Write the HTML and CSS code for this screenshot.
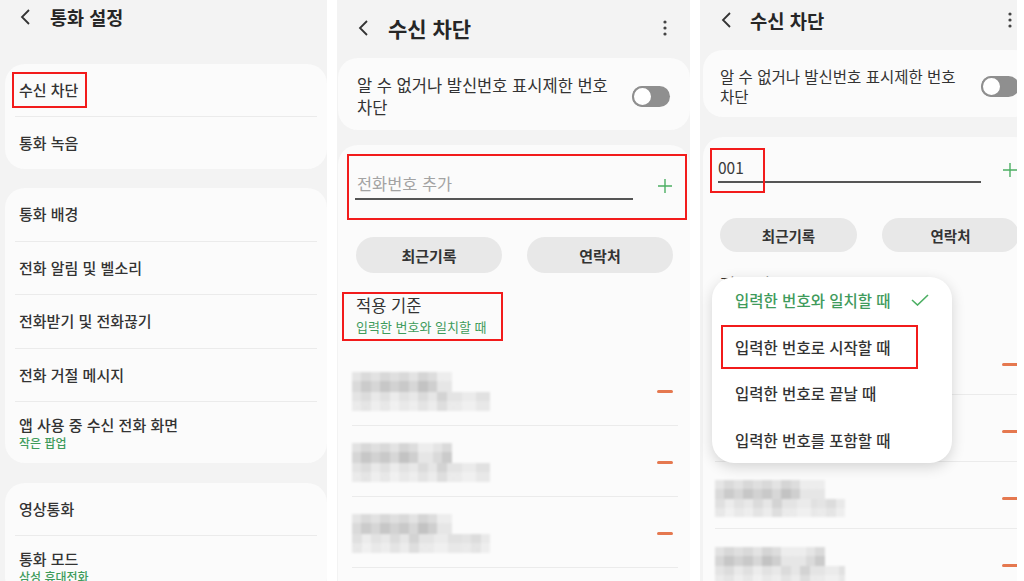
FILE: index.html
```html
<!DOCTYPE html>
<html lang="ko">
<head>
    <meta charset="UTF-8">
    <meta name="viewport" content="width=device-width, initial-scale=1.0">
    <title>수신 차단 설정</title>
    <link rel="stylesheet" href="styles.css">
</head>
<body>
    <div class="screens">

        <!-- 화면 1: 통화 설정 -->
        <section class="phone phone-settings">
            <div class="phone-inner">
                <header class="app-bar">
                    <svg class="back-icon" viewBox="0 0 12 16"><polyline points="10,1 3,8 10,15"/></svg>
                    <h1 class="app-title">통화 설정</h1>
                </header>

                <div class="card menu-card first">
                    <div class="menu-row"><span class="mark mark-item">수신 차단</span></div>
                    <div class="menu-row">통화 녹음</div>
                </div>

                <div class="card menu-card tall">
                    <div class="menu-row">통화 배경</div>
                    <div class="menu-row">전화 알림 및 벨소리</div>
                    <div class="menu-row">전화받기 및 전화끊기</div>
                    <div class="menu-row">전화 거절 메시지</div>
                    <div class="menu-row double">
                        <span>앱 사용 중 수신 전화 화면</span>
                        <span class="sub">작은 팝업</span>
                    </div>
                </div>

                <div class="card menu-card last">
                    <div class="menu-row">영상통화</div>
                    <div class="menu-row double">
                        <span>통화 모드</span>
                        <span class="sub">삼성 휴대전화</span>
                    </div>
                </div>
            </div>
        </section>

        <!-- 화면 2: 수신 차단 -->
        <section class="phone phone-block">
            <div class="phone-inner">
                <header class="app-bar">
                    <svg class="back-icon" viewBox="0 0 12 16"><polyline points="10,1 3,8 10,15"/></svg>
                    <h1 class="app-title">수신 차단</h1>
                    <svg class="more-icon" viewBox="0 0 4 16"><circle cx="2" cy="2" r="1.6"/><circle cx="2" cy="8" r="1.6"/><circle cx="2" cy="14" r="1.6"/></svg>
                </header>

                <div class="card card-switch">
                    <p class="switch-label">알 수 없거나 발신번호 표시제한 번호<br>차단</p>
                    <span class="toggle"><span class="toggle-knob"></span></span>
                </div>

                <div class="card card-list">
                    <div class="mark mark-field">
                        <div class="field">
                            <span class="field-input placeholder">전화번호 추가</span>
                            <svg class="add-icon" viewBox="0 0 16 16"><path d="M8 1v14M1 8h14"/></svg>
                        </div>
                    </div>

                    <div class="pick-buttons">
                        <button>최근기록</button>
                        <button>연락처</button>
                    </div>

                    <div class="mark mark-rule">
                        <div class="rule-title">적용 기준</div>
                        <div class="rule-value">입력한 번호와 일치할 때</div>
                    </div>

                    <ul class="blocked-list">
                        <li class="blocked-row"><div class="pixels"><span class="pixel-top"></span><span class="pixel-bot"></span></div><span class="remove"></span></li>
                        <li class="blocked-row"><div class="pixels"><span class="pixel-top"></span><span class="pixel-bot"></span></div><span class="remove"></span></li>
                        <li class="blocked-row"><div class="pixels"><span class="pixel-top"></span><span class="pixel-bot"></span></div><span class="remove"></span></li>
                        <li class="blocked-row"><div class="pixels"><span class="pixel-top"></span><span class="pixel-bot"></span></div><span class="remove"></span></li>
                    </ul>
                </div>
            </div>
        </section>

        <!-- 화면 3: 적용 기준 선택 -->
        <section class="phone phone-menu">
            <div class="phone-inner">
                <header class="app-bar">
                    <svg class="back-icon" viewBox="0 0 12 16"><polyline points="10,1 3,8 10,15"/></svg>
                    <h1 class="app-title">수신 차단</h1>
                    <svg class="more-icon" viewBox="0 0 4 16"><circle cx="2" cy="2" r="1.6"/><circle cx="2" cy="8" r="1.6"/><circle cx="2" cy="14" r="1.6"/></svg>
                </header>

                <div class="card card-switch">
                    <p class="switch-label">알 수 없거나 발신번호 표시제한 번호<br>차단</p>
                    <span class="toggle"><span class="toggle-knob"></span></span>
                </div>

                <div class="card card-list">
                    <div class="field">
                        <span class="field-input">001<span class="mark mark-value"></span></span>
                        <svg class="add-icon" viewBox="0 0 16 16"><path d="M8 1v14M1 8h14"/></svg>
                    </div>

                    <div class="pick-buttons">
                        <button>최근기록</button>
                        <button>연락처</button>
                    </div>

                    <div class="rule">
                        <div class="rule-title">적용 기준</div>
                        <div class="rule-value">입력한 번호와 일치할 때</div>
                    </div>

                    <ul class="blocked-list">
                        <li class="blocked-row"><div class="pixels"><span class="pixel-top"></span><span class="pixel-bot"></span></div><span class="remove"></span></li>
                        <li class="blocked-row"><div class="pixels"><span class="pixel-top"></span><span class="pixel-bot"></span></div><span class="remove"></span></li>
                        <li class="blocked-row"><div class="pixels"><span class="pixel-top"></span><span class="pixel-bot"></span></div><span class="remove"></span></li>
                        <li class="blocked-row"><div class="pixels"><span class="pixel-top"></span><span class="pixel-bot"></span></div><span class="remove"></span></li>
                    </ul>
                </div>

                <!-- 드롭다운 메뉴 -->
                <ul class="rule-menu">
                    <li class="menu-option selected">
                        <span class="option-label">입력한 번호와 일치할 때</span>
                        <svg class="check-icon" viewBox="0 0 18 12"><polyline points="1,6 6.5,11 17,1"/></svg>
                    </li>
                    <li class="menu-option"><span class="mark mark-option">입력한 번호로 시작할 때</span></li>
                    <li class="menu-option"><span class="option-label">입력한 번호로 끝날 때</span></li>
                    <li class="menu-option"><span class="option-label">입력한 번호를 포함할 때</span></li>
                </ul>
            </div>
        </section>

    </div>
</body>
</html>
```

FILE: styles.css
```css
/* GENERAL */
body {
    margin: 0;
    background-color: #fff;
    font-family: "Noto Sans CJK KR", "Noto Sans", sans-serif;
    color: #333;
}

.screens {
    display: flex;
    width: 1024px;
    height: 581px;
    overflow: hidden;
}

.phone {
    flex: none;
    background-color: #f3f3f3;
    overflow: hidden;
}

.phone-inner {
    position: relative;
    display: flex;
    flex-direction: column;
    height: 100%;
}

.phone-settings { width: 327px; }
.phone-block { width: 353px; margin-left: 10px; }
.phone-menu { width: 317px; margin-left: 10px; }
.phone-menu .phone-inner { width: 334px; }

/* RED ANNOTATION BOXES */
.mark {
    border: 2px solid #f21b1b;
    box-sizing: border-box;
}

/* APP BAR */
.app-bar {
    display: flex;
    align-items: center;
    flex: none;
}

.back-icon {
    width: 12px;
    height: 16px;
    fill: none;
    stroke: #333;
    stroke-width: 1.8;
}

.app-title {
    margin: 0;
    font-weight: bold;
    color: #262626;
}

.more-icon {
    width: 4px;
    height: 16px;
    margin-left: auto;
    fill: #444;
}

.phone-settings .app-bar { height: 34px; padding-left: 19px; }
.phone-settings .app-title { font-size: 18.5px; margin-left: 19px; }

.phone-block .app-bar { height: 56px; padding: 0 23px 0 20px; }
.phone-block .app-title { font-size: 21px; margin-left: 19px; }

.phone-menu .app-bar { height: 40px; padding: 0 22px 0 20px; }
.phone-menu .app-title { font-size: 18.75px; margin-left: 18px; }

/* CARDS */
.card {
    background-color: #fbfbfb;
    border-radius: 20px;
}

/* SETTINGS LIST */
.menu-card {
    margin-left: 5px;
    padding: 0 10px;
}

.menu-card.first { margin-top: 30px; }
.menu-card.tall { margin-top: 19px; }
.menu-card.last { margin-top: 20px; }

.menu-row {
    height: 52px;
    padding: 0 4px;
    display: flex;
    flex-direction: column;
    justify-content: center;
    align-items: flex-start;
    font-size: 15px;
    font-weight: 500;
    line-height: 20px;
}

.menu-card.tall .menu-row { height: 52.5px; }

.menu-row + .menu-row { border-top: 1px solid #ebebeb; }

.menu-card .menu-row.double { height: 61px; }

.sub {
    font-size: 12px;
    line-height: 16px;
    color: #3f9b5c;
}

.mark-item {
    margin-left: -7px;
    padding: 6px 7px 6px 5px;
}

/* SWITCH CARD */
.card-switch {
    display: flex;
    align-items: center;
    flex: none;
}

.switch-label { margin: 0; flex: 1; }

.toggle {
    position: relative;
    flex: none;
    width: 38px;
    height: 21px;
    border-radius: 11px;
    background-color: #8f8f8f;
}

.toggle-knob {
    position: absolute;
    left: 0;
    top: 0;
    width: 21px;
    height: 21px;
    box-sizing: border-box;
    border-radius: 50%;
    border: 2px solid #8f8f8f;
    background-color: #fff;
}

.phone-block .card-switch {
    margin: 2px 0 0 1px;
    padding: 16px 20px 12px 19px;
    font-size: 16.5px;
    line-height: 22px;
}

.phone-menu .card-switch {
    margin: 10px 0 0 3px;
    padding: 16px 15px 11px 17px;
    font-size: 15.5px;
    line-height: 20px;
}

/* BLOCK LIST CARD */
.card-list {
    flex: 1;
    margin-left: 1px;
    border-radius: 20px 20px 0 0;
}

.phone-block .card-list { margin-top: 15px; }
.phone-menu .card-list { margin: 20px 0 0 3px; }

.field {
    display: flex;
    align-items: center;
}

.field-input {
    position: relative;
    flex: 1;
    border-bottom: 2px solid #555;
    padding: 0 0 4px 2px;
    font-size: 16.4px;
    line-height: 22px;
}

.placeholder { color: #a3a3a3; }

.add-icon {
    width: 16px;
    height: 16px;
    margin-left: 24px;
    fill: none;
    stroke: #4caf63;
    stroke-width: 1.4;
}

.mark-field {
    margin: 9px 3px 0 9px;
    height: 66px;
    padding: 16px 12px 0 6px;
}

.phone-menu .field { margin: 20px 0 0 15px; }

.phone-menu .field-input {
    flex: none;
    width: 263px;
    padding-left: 0;
    font-size: 15.5px;
    line-height: 20px;
    color: #3a3a3a;
}

.phone-menu .add-icon { margin-left: 21px; }

.mark-value {
    position: absolute;
    left: -8px;
    top: -9px;
    width: 55px;
    height: 45px;
}

/* BUTTONS */
.pick-buttons {
    display: flex;
    gap: 25px;
    margin: 17px 17px 0 18px;
}

.pick-buttons button {
    flex: 1;
    height: 36px;
    border: none;
    border-radius: 18px;
    background-color: #e8e8e8;
    font-family: inherit;
    font-size: 15px;
    font-weight: bold;
    color: #333;
}

.phone-menu .pick-buttons { margin: 35px 15px 0 17px; }
.phone-menu .pick-buttons button { height: 34px; font-size: 14.5px; }

/* RULE */
.rule-title {
    font-size: 16.5px;
    line-height: 20px;
}

.rule-value {
    margin-top: 4px;
    font-size: 13px;
    line-height: 16px;
    color: #3f9b5c;
}

.mark-rule {
    margin: 19px 0 0 4px;
    width: 161px;
    height: 49px;
    padding: 1px 0 0 12px;
}

.rule { margin: 22px 0 0 17px; }

/* BLOCKED NUMBERS (PIXELATED) */
.blocked-list {
    list-style: none;
    margin: 14px 12px 0 14px;
    padding: 0;
}

.blocked-row {
    display: flex;
    align-items: center;
    justify-content: space-between;
    padding: 17px 5px 14px 0;
    border-bottom: 1px solid #ebebeb;
}

.pixels {
    display: flex;
    flex-direction: column;
    filter: blur(1.2px);
}

.pixel-top {
    width: 100px;
    height: 20px;
    background:
        linear-gradient(180deg, rgba(255,255,255,0.3) 0 9px, transparent 9px),
        linear-gradient(90deg, #dadada 0 9px, #cbcbcb 9px 19px, #d6d6d6 19px 28px, #c7c7c7 28px 38px, #d2d2d2 38px 47px, #c9c9c9 47px 57px, #d7d7d7 57px 66px, #c3c3c3 66px 76px, #cfcfcf 76px 85px, #e6e6e6 85px 100px);
}

.pixel-bot {
    width: 138px;
    height: 19px;
    background:
        linear-gradient(180deg, transparent 0 9px, rgba(255,255,255,0.25) 9px),
        linear-gradient(90deg, #e4e4e4 0 9px, #dcdcdc 9px 19px, #e9e9e9 19px 28px, #e0e0e0 28px 38px, #ececec 38px 47px, #e2e2e2 47px 57px, #e8e8e8 57px 66px, #dbdbdb 66px 76px, #e6e6e6 76px 85px, #d3d3d3 85px 95px, #e4e4e4 95px 110px, #ebebeb 110px 124px, #e1e1e1 124px 138px);
}

.blocked-row:nth-child(2n) .pixel-top { background-position: 0 0, -19px 0; }
.blocked-row:nth-child(3n) .pixel-bot { background-position: 0 0, -28px 0; }

.remove {
    width: 16px;
    height: 3px;
    border-radius: 2px;
    background-color: #e5784f;
}

.phone-menu .blocked-list { margin: 14px 15px 0 12px; }
.phone-menu .blocked-row { padding: 18px 1px 11px 0; }
.phone-menu .pixel-top { width: 110px; height: 19px; }
.phone-menu .pixel-bot { width: 130px; height: 18px; }

/* DROPDOWN MENU */
.rule-menu {
    position: absolute;
    left: 12px;
    top: 277px;
    width: 240px;
    height: 186px;
    margin: 0;
    padding: 0;
    list-style: none;
    background-color: #fff;
    border-radius: 22px;
    box-shadow: 0 4px 14px rgba(0, 0, 0, 0.16);
}

.menu-option {
    display: flex;
    align-items: center;
    height: 46.5px;
    padding-left: 9px;
    font-size: 15.5px;
    font-weight: 500;
    color: #333;
}

.option-label { padding-left: 14px; }

.menu-option.selected { color: #3f9b5c; }

.check-icon {
    width: 18px;
    height: 12px;
    margin-left: 20px;
    fill: none;
    stroke: #4caf63;
    stroke-width: 1.6;
}

.mark-option {
    display: flex;
    align-items: center;
    width: 197px;
    height: 44px;
    padding-left: 12px;
}
```
